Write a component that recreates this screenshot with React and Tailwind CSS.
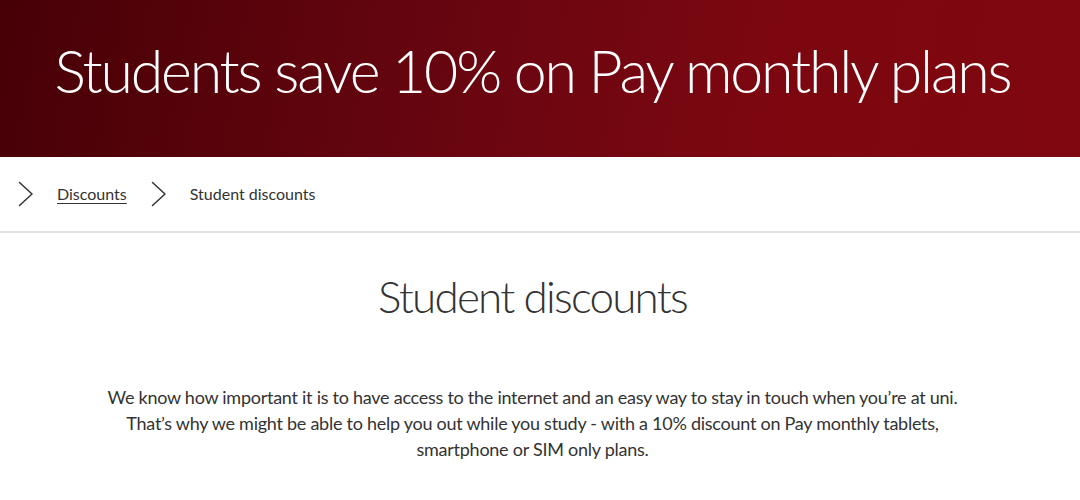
import React from "react";

const Chevron = () => (
    <svg className="w-[16px] h-[26px] text-[#333]" viewBox="0 0 16 26" fill="none" stroke="currentColor">
        <path d="M1.5 1.5L14 13L1.5 24.5" strokeWidth={1.5} strokeLinecap="round" strokeLinejoin="round" />
    </svg>
);

export default function App() {
    return (
        <div className="w-[1080px] min-h-[500px] bg-white font-['Lato',sans-serif] text-[#333]">
            {/* Hero */}
            <div className="h-[157px] bg-[linear-gradient(100deg,#470006_0%,#6a0610_45%,#7c0710_70%,#80070f_100%)] flex items-center">
                <h1 className="w-[1065px] text-center text-white font-light text-[59px] leading-none whitespace-nowrap tracking-[-2.2px] pb-[16px]">
                    Students save 10% on Pay monthly plans
                </h1>
            </div>

            {/* Breadcrumb */}
            <nav className="h-[76px] border-b-2 border-[#e2e2e2] flex items-center pl-[18px] text-[16px]">
                <Chevron />
                <a href="#" className="ml-[23px] underline underline-offset-[3px] decoration-1">Discounts</a>
                <span className="ml-[24px]"><Chevron /></span>
                <span className="ml-[23px]">Student discounts</span>
            </nav>

            {/* Content */}
            <section className="w-[1065px] flex flex-col items-center pt-[41px]">
                <h2 className="font-light text-[44px] leading-none tracking-[-1.8px] text-[#333]">Student discounts</h2>
                <p className="mt-[66px] text-center text-[18px] leading-[26px] tracking-[-0.26px] text-[#333] whitespace-nowrap">
                    We know how important it is to have access to the internet and an easy way to stay in touch when you’re at uni.<br />
                    That’s why we might be able to help you out while you study - with a 10% discount on Pay monthly tablets,<br />
                    smartphone or SIM only plans.
                </p>
            </section>
        </div>
    );
}
